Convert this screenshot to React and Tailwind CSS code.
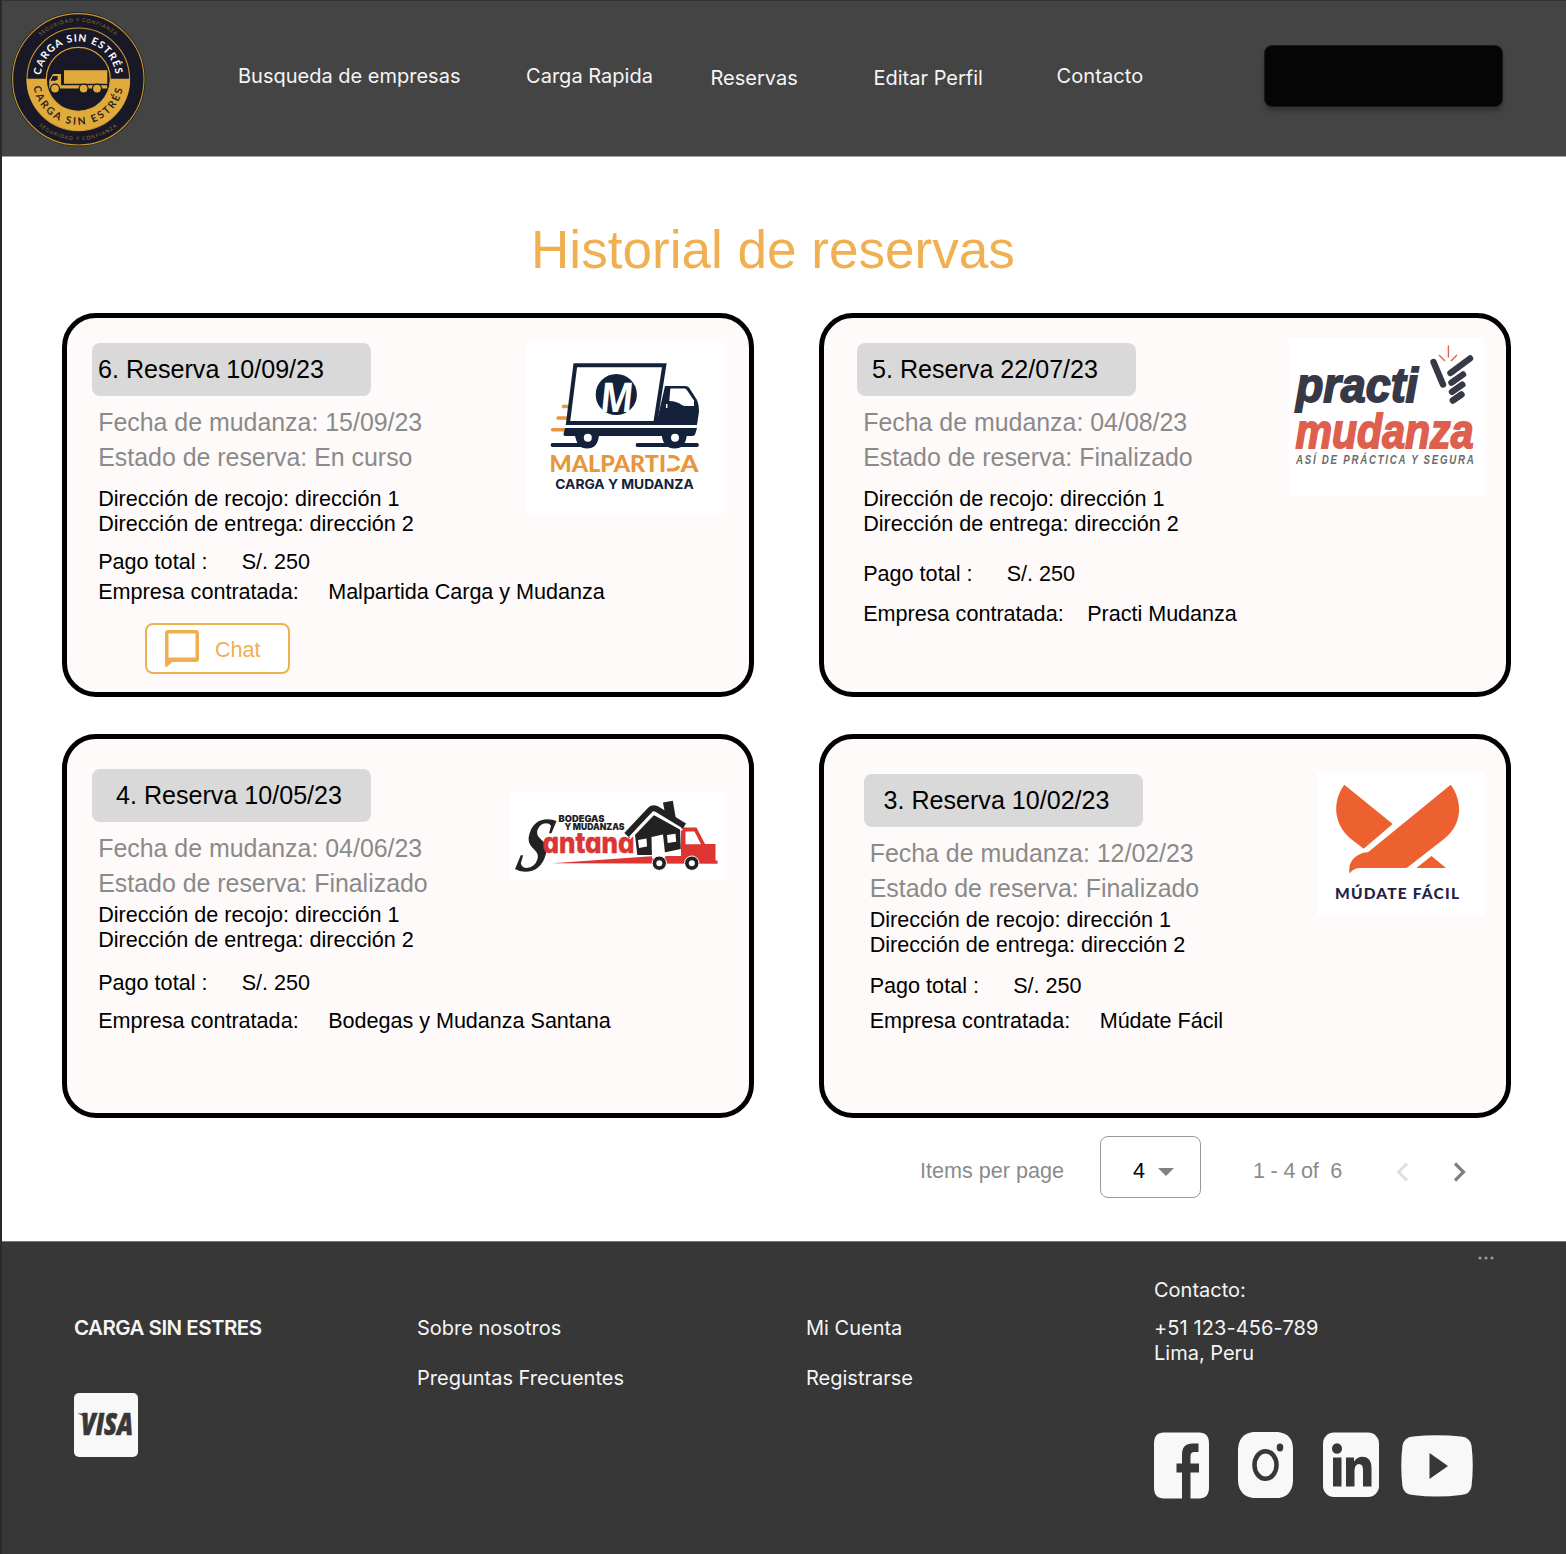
import React from "react";

const NAVY = "#14213a";

function BrandSeal() {
  return (
    <svg viewBox="0 0 136 136" className="mt-[10px] ml-[7px] h-[136px] w-[136px] shrink-0">
      <defs>
        <path id="seal-top" d="M30.6 68.3a37.7 37.7 0 0 1 75.4 0" />
        <path id="seal-bottom" d="M22.8 68.3a45.5 45.5 0 0 0 91 0" />
        <path id="seal-outer-top" d="M10.8 68.3a57.5 57.5 0 0 1 115 0" />
        <path id="seal-outer-bottom" d="M7.3 68.3a61 61 0 0 0 122 0" />
      </defs>
      <circle cx="68.3" cy="68.3" r="67" fill="#17171f" />
      <circle cx="68.3" cy="68.3" r="65.7" fill="#191826" stroke="#c9982f" strokeWidth="1.1" />
      <circle cx="68.3" cy="68.3" r="51.3" fill="#191826" stroke="#c9982f" strokeWidth="1.1" />
      <path d="M16.6 67.7h103.4a51.7 51.7 0 0 1 -103.4 0z" fill="#e0ab3b" />
      <circle cx="68.3" cy="68.3" r="32" fill="#191826" stroke="#d9a53a" strokeWidth="1.2" />
      <g fontFamily="Lato, sans-serif" textAnchor="middle">
        <text fontSize="10.3" fontWeight="700" fill="#ffffff" letterSpacing="1.1">
          <textPath href="#seal-top" startOffset="50%">CARGA SIN ESTRÉS</textPath>
        </text>
        <text fontSize="10.3" fontWeight="700" fill="#2b2420" letterSpacing="2.2">
          <textPath href="#seal-bottom" startOffset="50%">CARGA SIN ESTRÉS</textPath>
        </text>
        <text fontSize="5" fill="#94752f" letterSpacing="0.950">
          <textPath href="#seal-outer-top" startOffset="50%">SEGURIDAD Y CONFIANZA</textPath>
        </text>
        <text fontSize="5" fill="#94752f" letterSpacing="1.1">
          <textPath href="#seal-outer-bottom" startOffset="50%">SEGURIDAD Y CONFIANZA</textPath>
        </text>
      </g>
      <g fill="#e0ab3b">
        <path d="M54 59.200h43.300v13.500H54z" />
        <path d="M43 63h8v11.300h46.200v3.300H39.300V69z" />
        <path d="M40.500 69.800l2.400-4.800h4.700v3.500l-2.500 1.300z" fill="#191826" />
        <path d="M54 73.500h44" stroke="#191826" strokeWidth="1" />
        <g stroke="#191826" strokeWidth="1.200">
          <circle cx="45" cy="77.600" r="4.500" />
          <circle cx="73.600" cy="77.600" r="4.500" />
          <circle cx="87" cy="77.600" r="4.500" />
        </g>
      </g>
    </svg>
  );
}

function MalpartidaLogo() {
  return (
    <svg viewBox="0 0 198 170" className="mt-[24.5px] mr-[25px] h-[170px] w-[198px] shrink-0 bg-white">
      <g stroke="#e7963a" strokeWidth="3.4" strokeLinecap="round">
        <path d="M37.500 63.500h6M32 75h10M26.500 86.700h13" />
      </g>
      <path d="M139 43h20c2 0 3.500.8 4.500 2.300l7.200 11.200c1.700 3.500 2.300 8 2.300 12.200l-2 13.300h-41z" fill={NAVY} />
      <path d="M49.300 22.300h89l-9 57.700h-87.300z" fill="#fff" stroke={NAVY} strokeWidth="4" />
      <path d="M144.300 45.600h13.700c1.500 0 2.300.5 3 1.700l7 10.200v5.500h-9c-4 0-5-4.700-15.700-5z" fill="#fff" />
      <path d="M140.700 61v4" stroke="#fff" strokeWidth="1.500" />
      <path d="M39 85h132l-1.800 6.200q-.7 1.800-3 1.800h-5.500c-1 8-4.700 12.500-12 12.500s-12-4.500-12.800-12.500h-63c-.8 8-4.700 12.500-11.800 12.500s-10.500-4.500-12-12.500h-9.500q-2.500 0-2-2.500z" fill={NAVY} />
      <path d="M26.500 102h33M111.500 102h59.500" stroke={NAVY} strokeWidth="3.800" strokeLinecap="round" />
      <circle cx="61.800" cy="94.800" r="4" fill="#fff" />
      <circle cx="149" cy="94.800" r="4" fill="#fff" />
      <circle cx="90.300" cy="51.500" r="20.600" fill={NAVY} />
      <g transform="translate(73 69) skewX(-6)">
        <text x="0" y="0" fontFamily="Open Sans, sans-serif" fontWeight="700" fontSize="41" fill="#fff" textLength="33" lengthAdjust="spacingAndGlyphs">M</text>
      </g>
      <g fontFamily="Lato, sans-serif" fontWeight="900" fill="#e7963a">
        <text x="23.500" y="128.700" fontSize="23.500" textLength="116.500" lengthAdjust="spacingAndGlyphs">MALPARTI</text>
        <text x="154.500" y="128.700" fontSize="23.500" textLength="18" lengthAdjust="spacingAndGlyphs">A</text>
      </g>
      <path d="M142.500 113.700h4.500a6.600 6.600 0 0 1 5.800 4M152.800 123a6.600 6.600 0 0 1 -5.800 3.900h-6" fill="none" stroke="#e7963a" strokeWidth="3.200" />
      <text x="29.300" y="145.800" fontFamily="Inter, sans-serif" fontWeight="700" fontSize="13.700" fill={NAVY} textLength="138.500" lengthAdjust="spacingAndGlyphs">CARGA Y MUDANZA</text>
    </svg>
  );
}

function PractiLogo() {
  return (
    <svg viewBox="0 0 195 158" className="mt-[19.5px] mr-[22px] h-[158px] w-[195px] shrink-0 bg-white">
      <g fontFamily="Liberation Sans, sans-serif" fontStyle="italic" fontWeight="700">
        <text x="7" y="63.500" fontSize="48.500" fill="#373947" stroke="#373947" strokeWidth="1.800" textLength="122" lengthAdjust="spacingAndGlyphs">practi</text>
        <text x="6.500" y="109.700" fontSize="48.500" fill="#df5f4e" stroke="#df5f4e" strokeWidth="1.800" textLength="178" lengthAdjust="spacingAndGlyphs">mudanza</text>
        <g transform="translate(7 126) scale(.76 1)">
          <text x="0" y="0" fontSize="12.800" fill="#6b6b6b" textLength="234">ASÍ DE PRÁCTICA Y SEGURA</text>
        </g>
      </g>
      <g stroke="#373947" strokeWidth="6.400" strokeLinecap="round">
        <path d="M144.500 24l9.500 22.500" />
        <path d="M161.500 35L181 20.500M162.500 44.700L174 36.500M163 53.800L173.300 46.700M163.800 62.500L172.500 56.500" />
      </g>
      <path d="M159.400 7.500v12M150 17l6 6M168 17l-6 6" stroke="#df5f4e" strokeWidth="1.400" />
    </svg>
  );
}

function SantanaLogo() {
  return (
    <svg viewBox="0 0 215 88" className="mt-[53px] mr-[25px] h-[88px] w-[215px] shrink-0 bg-white">
      <g fontFamily="Inter, sans-serif" fontWeight="900" fill="#242122">
        <text x="49.500" y="30" fontSize="9" textLength="46" lengthAdjust="spacingAndGlyphs">BODEGAS</text>
        <text x="55.500" y="38.200" fontSize="9" textLength="60" lengthAdjust="spacingAndGlyphs">Y MUDANZAS</text>
      </g>
      <g transform="translate(4.500 78.800) skewX(-16)">
        <text x="0" y="0" fontFamily="Liberation Serif, serif" fontStyle="italic" fontWeight="700" fontSize="78" fill="#242122" textLength="31" lengthAdjust="spacingAndGlyphs">S</text>
      </g>
      <text x="33.500" y="60.700" fontFamily="Inter, sans-serif" fontWeight="800" fontSize="28.500" fill="#dc3532" stroke="#dc3532" strokeWidth=".5" textLength="92" lengthAdjust="spacingAndGlyphs" className="[font-feature-settings:'cv11']">antana</text>
      <path d="M43 71.200L146 64h26v-28.500h15.500l8.500 16.500h10.500v16.500h2v3.200z" fill="#dc3532" />
      <path d="M176.500 39.500h9l6.500 12.800h-15.500z" fill="#fff" />
      <path d="M126 43l19.500-20.500 25.500 14 .8 20.500-28.500 6h-15z" fill="#242122" />
      <path d="M142.500 45l11.500-2.500 2.500 23-13.500 1z" fill="#fff" />
      <path d="M129 48l8.500-1.500.5 8-8 1.500zM158 43l8.500-1.200.7 8-8.500 1.300z" fill="#fff" />
      <path d="M117.500 43l23-24.500q3-3.500 7-1.500l28 17" fill="none" stroke="#242122" strokeWidth="6" />
      <path d="M120.500 47l21-23q2-2.500 5-1l27 15" fill="none" stroke="#fff" strokeWidth="1.600" />
      <path d="M154 10.500l9.800-1.700 3.200 18.500-11-6z" fill="#242122" />
      <g fill="#242122" stroke="#fff" strokeWidth="1">
        <circle cx="150.300" cy="71.200" r="7.200" />
        <circle cx="182.800" cy="71.200" r="7.200" />
      </g>
      <circle cx="150.300" cy="71.200" r="3" fill="#fff" />
      <circle cx="182.800" cy="71.200" r="3" fill="#fff" />
    </svg>
  );
}

function MudateLogo() {
  return (
    <svg viewBox="0 0 167 142" className="mt-[34px] mr-[22px] h-[142px] w-[167px] shrink-0 bg-white">
      <g fill="#ec612f">
        <path d="M27.300 11.700L75.700 51 46.700 75.700 34 66C15 50 16 27 27.300 11.700z" />
        <path d="M133.700 11.700C145 27 147 50 127 66L89.700 95H43C38 95 35 97.500 32.300 100.500V95C33 86 42 79.500 51 79.300z" />
        <path d="M114.500 83l14.500 12H99.300z" />
      </g>
      <text x="18" y="126" fontFamily="Lato, sans-serif" fontWeight="900" fontSize="15.500" fill="#232145" textLength="124" lengthAdjust="spacing">MÚDATE FÁCIL</text>
    </svg>
  );
}

const reservations = [
  {
    title: "6. Reserva 10/09/23",
    date: "15/09/23",
    status: "En curso",
    company: "Malpartida Carga y Mudanza",
    chat: true,
    Logo: MalpartidaLogo,
    body: "pt-[24.5px] pl-[25px]",
    chip: "pl-[6px]",
    addresses: "mt-[11px]",
    payment: "mt-[13px]",
    contractor: "mt-[5px]",
    label: "w-[230px]",
  },
  {
    title: "5. Reserva 22/07/23",
    date: "04/08/23",
    status: "Finalizado",
    company: "Practi Mudanza",
    Logo: PractiLogo,
    body: "pt-[24.5px] pl-[33px]",
    chip: "pl-[15px]",
    addresses: "mt-[11px]",
    payment: "mt-[25px]",
    contractor: "mt-[15px]",
    label: "w-[224px]",
  },
  {
    title: "4. Reserva 10/05/23",
    date: "04/06/23",
    status: "Finalizado",
    company: "Bodegas y Mudanza Santana",
    Logo: SantanaLogo,
    body: "pt-[30px] pl-[25px]",
    chip: "pl-[24px]",
    addresses: "mt-[1px]",
    payment: "mt-[18px]",
    contractor: "mt-[13px]",
    label: "w-[230px]",
  },
  {
    title: "3. Reserva 10/02/23",
    date: "12/02/23",
    status: "Finalizado",
    company: "Múdate Fácil",
    Logo: MudateLogo,
    body: "pt-[35px] pl-[39.5px]",
    chip: "pl-[20px]",
    addresses: "mt-[1px]",
    payment: "mt-[16px]",
    contractor: "mt-[10px]",
    label: "w-[230px]",
  },
];

function ReservationCard({ item }) {
  const { Logo } = item;
  return (
    <article className="flex h-[384px] w-[692px] items-start justify-between rounded-[34px] border-5 border-black bg-[#fefaf9]">
      <div className={`${item.body} w-0 text-[21.600px] leading-[25px] whitespace-nowrap text-black`}>
        <h2 className={`${item.chip} h-[53px] w-[279px] rounded-lg bg-[#d9d9d9] text-[25.100px] leading-[53px]`}>
          {item.title}
        </h2>
        <div className="pl-[6.200px]">
          <div className="mt-[9px] text-[24.920px] leading-[35px] text-[#8b8a8a]">
            <p>Fecha de mudanza: {item.date}</p>
            <p>Estado de reserva: {item.status}</p>
          </div>
          <div className={item.addresses}>
            <p>Dirección de recojo: dirección 1</p>
            <p>Dirección de entrega: dirección 2</p>
          </div>
          <div className={`${item.payment} flex`}>
            <span className="w-[143.500px] shrink-0">Pago total :</span>
            <span>S/. 250</span>
          </div>
          <div className={`${item.contractor} flex`}>
            <span className={`${item.label} shrink-0`}>Empresa contratada:</span>
            <span className="tracking-[-0.030px]">{item.company}</span>
          </div>
          {item.chat && (
            <button className="mt-[19px] ml-[46.800px] flex h-[51px] w-[145px] items-center rounded-lg border-2 border-[#f0b052] bg-white text-[#f0b052]">
              <svg viewBox="0 0 34 37" className="ml-[18px] h-[37px] w-[34px]">
                <path d="M3 0h28q3 0 3 3v26q0 3-3 3H7l-4.500 4.500Q0 38 0 35V3q0-3 3-3zM3.500 3.500v24h27v-24z" fill="currentColor" fillRule="evenodd" />
              </svg>
              <span className="mt-[3px] ml-[16px]">Chat</span>
            </button>
          )}
        </div>
      </div>
      <Logo />
    </article>
  );
}

function Header() {
  return (
    <header className="flex h-[157px] items-start border-t border-b border-t-[#333] border-b-[#a3a3a3] bg-[#444444] pl-[1px]">
      <BrandSeal />
      <nav className="mt-[60px] ml-[92px] flex w-[1026px] shrink-0 text-[20px] leading-[30px] whitespace-nowrap text-[#f5f5f5]">
        <a className="w-[288px]">Busqueda de empresas</a>
        <a className="w-[184.500px] tracking-[0.020px]">Carga Rapida</a>
        <a className="mt-[2px] w-[163px]">Reservas</a>
        <a className="mt-[2px] w-[183px]">Editar Perfil</a>
        <a className="tracking-[0.100px]">Contacto</a>
      </nav>
      <button className="mt-[44px] h-[62px] w-[239px] rounded-lg border border-[#1b1b1b] bg-[#050505] shadow-[0_4px_4px_rgba(0,0,0,0.250)]" />
    </header>
  );
}

function Pagination() {
  return (
    <div className="mt-[18px] flex h-[62px] items-center pl-[918px] font-['Liberation_Sans',Arial,sans-serif] text-[21.600px] whitespace-pre text-[#8b8b8b]">
      <span className="mt-[8px] w-[180px]">Items per page</span>
      <div className="flex h-[62px] w-[101px] items-center rounded-lg border border-[#999] bg-white">
        <span className="mt-[8px] ml-[32px] text-black">4</span>
        <svg viewBox="0 0 16 8" className="mt-[9px] ml-[13px] h-[8px] w-[16px]">
          <path d="M0 0h16L8 8z" fill="#808080" />
        </svg>
      </div>
      <span className="mt-[8px] ml-[52px] w-[143px] tracking-[-0.200px]">1 - 4 of  6</span>
      <svg viewBox="0 0 13 20" className="mt-[9px] h-[20px] w-[13px]" fill="none" stroke="#dedede" strokeWidth="3">
        <path d="M11 1.500L2.500 10 11 18.500" />
      </svg>
      <svg viewBox="0 0 13 20" className="mt-[9px] ml-[44px] h-[20px] w-[13px]" fill="none" stroke="#808080" strokeWidth="3.200">
        <path d="M2 1.500L10.500 10 2 18.500" />
      </svg>
    </div>
  );
}

function SocialIcons() {
  return (
    <div className="flex items-start fill-[#f8f8f8]">
      <svg viewBox="0 0 55 67" className="h-[67px] w-[55px]">
        <path d="M10 .5h35q10 0 10 11v44q0 11-10 11h-8.500V40.500h8.500V31.500h-8.500V24q0-4 4-4h4V11.500h-6q-10.500 0-10.500 11v9h-5.500v9h5.500V66.500H10q-10 0-10-11v-44q0-11 10-11z" />
      </svg>
      <svg viewBox="0 0 55 67" className="ml-[29px] h-[67px] w-[55px]">
        <path d="M15 0h25q15 2 15 17v32q-1 15-14 17H15Q1 64 0 49V17Q1 2 15 0z" />
        <ellipse cx="27.500" cy="33" rx="11" ry="13.800" fill="none" stroke="#373737" strokeWidth="4.500" />
        <ellipse cx="42" cy="15.500" rx="3.300" ry="4" fill="#373737" />
      </svg>
      <svg viewBox="0 0 56 66" className="ml-[30px] h-[66px] w-[56px]">
        <rect y=".5" width="56" height="64.500" rx="11" />
        <g fill="#373737">
          <ellipse cx="14" cy="16.500" rx="5" ry="5.300" />
          <path d="M10 25.500h8.500v29H10zM23 25.500h8v4q3-4.700 8.500-4.700 9 0 9 12v17.700h-8.500V38q0-6-4-6t-4.500 6v16.500H23z" />
        </g>
      </svg>
      <svg viewBox="0 0 72 62" className="mt-[3px] ml-[22px] h-[62px] w-[72px]">
        <path d="M12 1.500Q36-1 60 1.500q9 .8 10.500 9 2.500 20 0 41-1.500 8-10.500 8.500Q36 63 12 60 3 59.500 1.500 51.500q-2.500-20 0-41Q3 2.300 12 1.500z" />
        <path d="M28.500 18v26l18.500-13z" fill="#373737" />
      </svg>
    </div>
  );
}

function Footer() {
  return (
    <footer className="mt-[43px] flex h-[313px] border-t border-[#777] bg-[#373737] pl-[72px] text-[20px] leading-[25px] whitespace-nowrap text-[#f5f5f5]">
      <div className="w-[343px] pt-[73px]">
        <p className="text-[20.500px] font-semibold tracking-[-0.520px]">CARGA SIN ESTRES</p>
        <svg viewBox="0 0 64 64" className="mt-[53px] h-[64px] w-[64px]">
          <rect width="64" height="64" rx="5" fill="#f8f8f8" />
          <g fontFamily="Open Sans, sans-serif" fontWeight="800" fontStyle="italic" fill="#373737">
            <text x="7" y="42.300" fontSize="30" stroke="#373737" strokeWidth=".7" textLength="52" lengthAdjust="spacingAndGlyphs">VISA</text>
          </g>
          <path d="M3.500 20.500h8l1.500 6q-3-4-9.500-6z" fill="#373737" />
        </svg>
      </div>
      <div className="flex w-[389px] flex-col gap-[25px] pt-[74px]">
        <a>Sobre nosotros</a>
        <a>Preguntas Frecuentes</a>
      </div>
      <div className="flex w-[348px] flex-col gap-[25px] pt-[74px]">
        <a>Mi Cuenta</a>
        <a>Registrarse</a>
      </div>
      <div className="w-[341px]">
        <svg viewBox="0 0 16 4" className="mt-[14px] ml-[324px] h-[4px] w-[16px]" fill="#999">
          <circle cx="2" cy="2" r="1.600" />
          <circle cx="8" cy="2" r="1.600" />
          <circle cx="14" cy="2" r="1.600" />
        </svg>
        <p className="mt-[18px]">Contacto:</p>
        <p className="mt-[13px] tracking-[0.100px]">+51 123-456-789</p>
        <p>Lima, Peru</p>
        <div className="mt-[66px]">
          <SocialIcons />
        </div>
      </div>
    </footer>
  );
}

export default function App() {
  return (
    <div className="h-[1554px] w-[1566px] overflow-hidden border-l-2 border-[#2a2a2a] bg-white font-[Inter,sans-serif]">
      <Header />
      <main className="font-['Liberation_Sans',Arial,sans-serif]">
        <h1 className="mt-[63px] h-[93px] pl-[529px] text-[53.100px] leading-[60px] whitespace-nowrap text-[#f0b052]">
          Historial de reservas
        </h1>
        <section className="ml-[60px] grid grid-cols-[692px_692px] gap-x-[65px] gap-y-[37px]">
          {reservations.map((item) => (
            <ReservationCard key={item.title} item={item} />
          ))}
        </section>
        <Pagination />
      </main>
      <Footer />
    </div>
  );
}
